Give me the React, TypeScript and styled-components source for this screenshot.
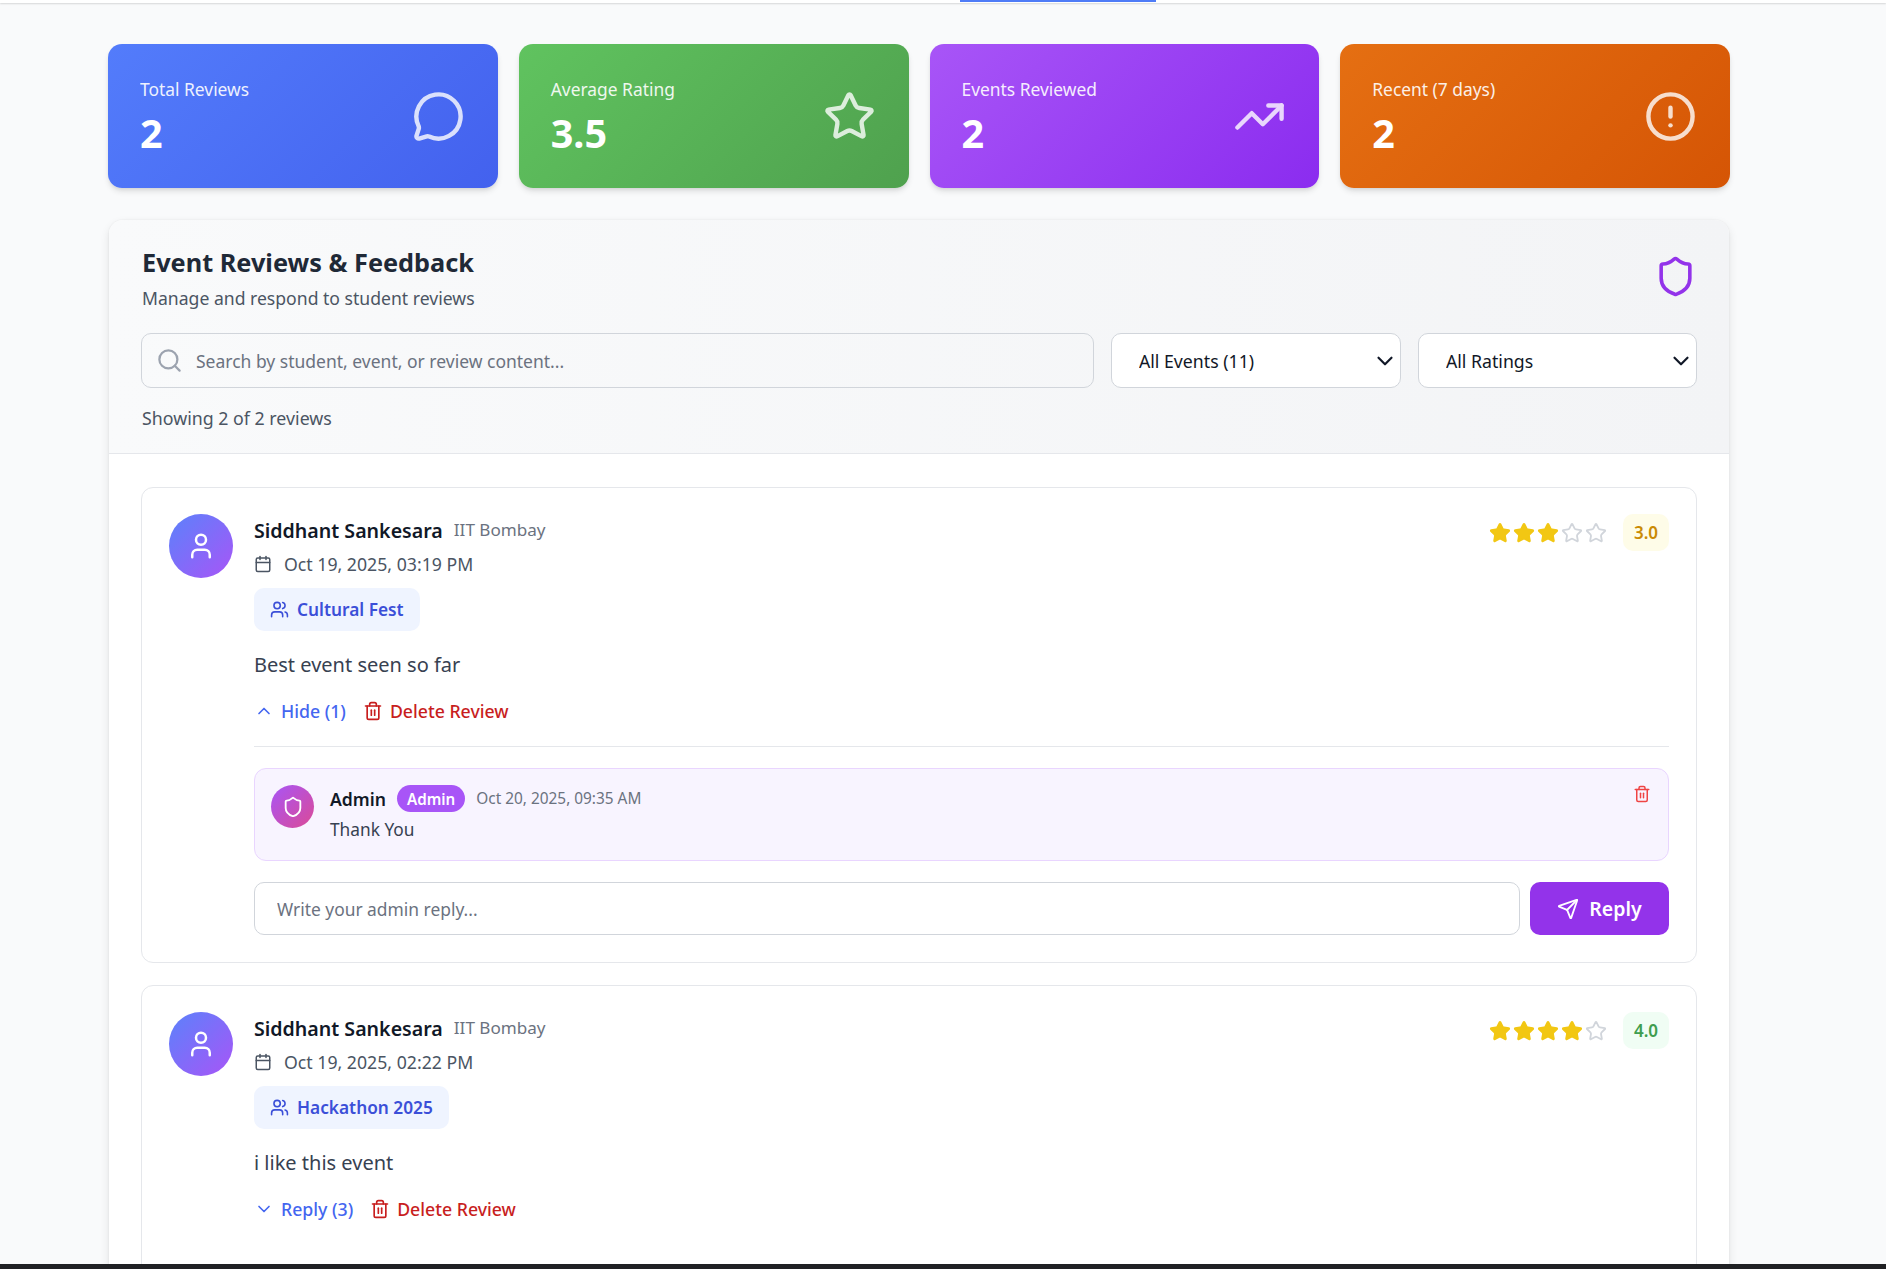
import React, { FC } from "react";
import styled, { createGlobalStyle } from "styled-components";
import {
  Calendar,
  ChevronDown,
  ChevronUp,
  CircleAlert,
  MessageCircle,
  Search,
  Send,
  Shield,
  Star,
  Trash2,
  TrendingUp,
  User,
  Users,
} from "lucide-react";

const GlobalStyle = createGlobalStyle`
  html, body {
    margin: 0;
    height: 100%;
    overflow: hidden;
    background: #f9fafb;
    font-family: "Noto Sans", "Open Sans", Arial, sans-serif;
  }
  * {
    box-sizing: border-box;
  }
`;

const Page = styled.div`
  display: flex;
  flex-direction: column;
  height: 100vh;
`;

const TopBar = styled.div`
  flex: none;
  height: 3px;
  padding-left: 960px;
  background: #ffffff;
  box-shadow: 0 1px 2px rgba(0, 0, 0, 0.14);
`;

const ActiveTab = styled.div`
  width: 196px;
  height: 2px;
  background: #4f7cf7;
`;

const Main = styled.main`
  flex: 1;
  min-height: 0;
  overflow: hidden;
  padding: 41px 0 0 108px;
`;

const Content = styled.div`
  width: 1622px;
`;

const StatGrid = styled.div`
  display: grid;
  grid-template-columns: repeat(4, 1fr);
  gap: 21px;
  margin-bottom: 32px;
`;

const StatCard = styled.div<{ $from: string; $to: string }>`
  display: flex;
  align-items: center;
  justify-content: space-between;
  height: 144px;
  padding: 0 33px 0 32px;
  border-radius: 14px;
  color: #ffffff;
  background: linear-gradient(135deg, ${(p) => p.$from}, ${(p) => p.$to});
  box-shadow: 0 4px 6px -1px rgba(0, 0, 0, 0.12), 0 2px 4px -2px rgba(0, 0, 0, 0.1);

  svg {
    opacity: 0.8;
  }
`;

const StatLabel = styled.div`
  font-size: 17.4px;
  line-height: 24px;
  opacity: 0.9;
  margin-bottom: 9px;
`;

const StatValue = styled.div`
  font-size: 39.5px;
  line-height: 46px;
  font-weight: 700;
`;

const Panel = styled.section`
  margin: 0 1px;
  background: #ffffff;
  border-radius: 14px 14px 0 0;
  box-shadow: 0 4px 10px rgba(0, 0, 0, 0.1), 0 0 2px rgba(0, 0, 0, 0.08);
  overflow: hidden;
`;

const PanelHeader = styled.header`
  padding: 25px 32px 23px;
  border-bottom: 1px solid #e5e7eb;
  background: linear-gradient(90deg, #f9fafb, #f3f4f6);
`;

const TitleRow = styled.div`
  display: flex;
  justify-content: space-between;
  align-items: center;
  margin-bottom: 23px;

  > svg {
    margin-bottom: 2px;
  }
`;

const Title = styled.h2`
  margin: -1px 0 6px;
  padding-left: 1px;
  font-size: 25.3px;
  line-height: 36px;
  font-weight: 700;
  color: #1f2937;
`;

const Subtitle = styled.p`
  margin: 0;
  padding-left: 1px;
  font-size: 17.6px;
  line-height: 24px;
  color: #4b5563;
`;

const Filters = styled.div`
  display: flex;
  gap: 17px;
  margin-bottom: 18px;
`;

const SearchBox = styled.label`
  position: relative;
  flex: 1;
  height: 55px;

  svg {
    position: absolute;
    left: 15px;
    top: 14px;
    color: #9ca3af;
  }
`;

const SearchInput = styled.input`
  width: 100%;
  height: 100%;
  padding: 0 16px 0 54px;
  border: 1px solid #d1d5db;
  border-radius: 10px;
  background: transparent;
  font: inherit;
  font-size: 17.5px;
  outline: none;

  &::placeholder {
    color: #6b7280;
    opacity: 1;
  }
`;

const SelectWrap = styled.div<{ $width: number }>`
  position: relative;
  flex: none;
  width: ${(p) => p.$width}px;
  height: 55px;

  svg {
    position: absolute;
    right: 3px;
    top: 15px;
    color: #111827;
    pointer-events: none;
  }
`;

const Select = styled.select`
  appearance: none;
  width: 100%;
  height: 100%;
  padding: 0 27px;
  border: 1px solid #d1d5db;
  border-radius: 10px;
  background: #ffffff;
  color: #111827;
  font: inherit;
  font-size: 17.7px;
`;

const ShowingText = styled.div`
  padding-left: 1px;
  font-size: 17.8px;
  line-height: 24px;
  color: #4b5563;
`;

const ReviewList = styled.div`
  display: flex;
  flex-direction: column;
  gap: 22px;
  padding: 33px 32px 0;
`;

const ReviewCard = styled.article`
  display: flex;
  gap: 21px;
  min-height: 320px;
  padding: 26px 27px 27px;
  border: 1px solid #e5e7eb;
  border-radius: 12px;
  background: #ffffff;
`;

const Avatar = styled.div<{ $size: number; $from: string; $to: string }>`
  display: flex;
  align-items: center;
  justify-content: center;
  flex: none;
  width: ${(p) => p.$size}px;
  height: ${(p) => p.$size}px;
  border-radius: 50%;
  color: #ffffff;
  background: linear-gradient(135deg, ${(p) => p.$from}, ${(p) => p.$to});
`;

const ReviewBody = styled.div`
  flex: 1;
  min-width: 0;
`;

const ReviewTop = styled.div`
  display: flex;
  justify-content: space-between;
  align-items: flex-start;
`;

const NameRow = styled.div`
  display: flex;
  align-items: center;
  gap: 11px;
  height: 26px;
  margin: 3px 0 9px;
`;

const StudentName = styled.span`
  font-size: 19.6px;
  font-weight: 600;
  color: #111827;
`;

const College = styled.span`
  margin-bottom: 2px;
  font-size: 17.1px;
  color: #6b7280;
`;

const DateRow = styled.div`
  display: flex;
  align-items: center;
  gap: 12px;
  height: 24px;
  margin-bottom: 12px;
  font-size: 17.7px;
  color: #4b5563;
`;

const EventChip = styled.div`
  display: inline-flex;
  align-items: center;
  gap: 8px;
  height: 43px;
  padding: 0 16px;
  border-radius: 10px;
  background: #eff4ff;
  color: #3b4fd8;
  font-size: 17.3px;
  font-weight: 600;
`;

const RatingRow = styled.div`
  display: flex;
  align-items: center;
  gap: 16px;
`;

const Stars = styled.div`
  display: flex;
  gap: 2px;
`;

const RatingBadge = styled.div<{ $bg: string; $color: string }>`
  display: flex;
  align-items: center;
  justify-content: center;
  width: 46px;
  height: 37px;
  border-radius: 10px;
  background: ${(p) => p.$bg};
  color: ${(p) => p.$color};
  font-size: 17px;
  font-weight: 600;
`;

const Comment = styled.p`
  margin: 20px 0 20px;
  font-size: 20px;
  line-height: 28px;
  color: #374151;
`;

const Actions = styled.div`
  display: flex;
  align-items: center;
  gap: 17px;
  height: 24px;
`;

const ActionLink = styled.button<{ $color: string }>`
  display: inline-flex;
  align-items: center;
  gap: 7px;
  padding: 0;
  border: 0;
  background: none;
  color: ${(p) => p.$color};
  font: inherit;
  font-size: 17.7px;
  font-weight: 500;
`;

const Replies = styled.div`
  margin-top: 23px;
  padding-top: 21px;
  border-top: 1px solid #e5e7eb;
`;

const ReplyBox = styled.div`
  display: flex;
  gap: 16px;
  height: 93px;
  padding: 16px 17px 16px 16px;
  border: 1px solid #e9d5ff;
  border-radius: 12px;
  background: #f8f4ff;
`;

const ReplyBody = styled.div`
  flex: 1;
`;

const ReplyHead = styled.div`
  display: flex;
  align-items: center;
  gap: 11px;
  height: 27px;
  margin-bottom: 6px;
`;

const ReplyAuthor = styled.span`
  font-size: 17.6px;
  font-weight: 600;
  color: #111827;
`;

const AdminPill = styled.span`
  display: flex;
  align-items: center;
  height: 27px;
  padding: 0 10px;
  border-radius: 14px;
  background: #a855f7;
  color: #ffffff;
  font-size: 15.2px;
  font-weight: 600;
`;

const ReplyDate = styled.span`
  font-size: 15.4px;
  color: #6b7280;
`;

const ReplyText = styled.div`
  font-size: 17.3px;
  line-height: 24px;
  color: #374151;
`;

const ReplyDelete = styled.button`
  flex: none;
  align-self: flex-start;
  height: 18px;
  padding: 0;
  border: 0;
  background: none;
  color: #ef4444;
`;

const ReplyForm = styled.div`
  display: flex;
  gap: 10px;
  margin-top: 21px;
`;

const ReplyInput = styled.input`
  flex: 1;
  height: 53px;
  padding: 0 22px;
  border: 1px solid #d1d5db;
  border-radius: 10px;
  background: #ffffff;
  font: inherit;
  font-size: 17.4px;
  outline: none;

  &::placeholder {
    color: #6b7280;
    opacity: 1;
  }
`;

const ReplyButton = styled.button`
  display: flex;
  align-items: center;
  justify-content: center;
  gap: 10px;
  flex: none;
  width: 139px;
  height: 53px;
  border: 0;
  border-radius: 10px;
  background: #9333ea;
  color: #ffffff;
  font: inherit;
  font-size: 19.5px;
  font-weight: 600;
`;

const BottomBar = styled.div`
  flex: none;
  height: 5px;
  background: #202124;
`;

const stats = [
  { label: "Total Reviews", value: "2", from: "#537cfb", to: "#4361ee", Icon: MessageCircle },
  { label: "Average Rating", value: "3.5", from: "#60c35f", to: "#4fa14e", Icon: Star },
  { label: "Events Reviewed", value: "2", from: "#a855f7", to: "#8b2cef", Icon: TrendingUp },
  { label: "Recent (7 days)", value: "2", from: "#e56f12", to: "#d55505", Icon: CircleAlert },
];

const RatingStars: FC<{ rating: number }> = ({ rating }) => (
  <Stars>
    {[1, 2, 3, 4, 5].map((n) => (
      <Star
        key={n}
        size={22}
        color={n <= rating ? "#f2c713" : "#d1d5db"}
        fill={n <= rating ? "#f2c713" : "none"}
      />
    ))}
  </Stars>
);

const ReviewMain: FC<{
  date: string;
  event: string;
  rating: number;
  badgeBg: string;
  badgeColor: string;
  comment: string;
}> = ({ date, event, rating, badgeBg, badgeColor, comment }) => (
  <>
    <ReviewTop>
      <div>
        <NameRow>
          <StudentName>Siddhant Sankesara</StudentName>
          <College>IIT Bombay</College>
        </NameRow>
        <DateRow>
          <Calendar size={18} />
          {date}
        </DateRow>
        <EventChip>
          <Users size={19} />
          {event}
        </EventChip>
      </div>
      <RatingRow>
        <RatingStars rating={rating} />
        <RatingBadge $bg={badgeBg} $color={badgeColor}>
          {rating.toFixed(1)}
        </RatingBadge>
      </RatingRow>
    </ReviewTop>
    <Comment>{comment}</Comment>
  </>
);

export default function App() {
  return (
    <Page>
      <GlobalStyle />
      <TopBar>
        <ActiveTab />
      </TopBar>
      <Main>
        <Content>
          <StatGrid>
            {stats.map(({ label, value, from, to, Icon }) => (
              <StatCard key={label} $from={from} $to={to}>
                <div>
                  <StatLabel>{label}</StatLabel>
                  <StatValue>{value}</StatValue>
                </div>
                <Icon size={53} />
              </StatCard>
            ))}
          </StatGrid>

          <Panel>
            <PanelHeader>
              <TitleRow>
                <div>
                  <Title>Event Reviews &amp; Feedback</Title>
                  <Subtitle>Manage and respond to student reviews</Subtitle>
                </div>
                <Shield size={43} color="#9333ea" />
              </TitleRow>
              <Filters>
                <SearchBox>
                  <Search size={27} />
                  <SearchInput placeholder="Search by student, event, or review content..." />
                </SearchBox>
                <SelectWrap $width={290}>
                  <Select defaultValue="all">
                    <option value="all">All Events (11)</option>
                  </Select>
                  <ChevronDown size={26} />
                </SelectWrap>
                <SelectWrap $width={279}>
                  <Select defaultValue="all">
                    <option value="all">All Ratings</option>
                  </Select>
                  <ChevronDown size={26} />
                </SelectWrap>
              </Filters>
              <ShowingText>Showing 2 of 2 reviews</ShowingText>
            </PanelHeader>

            <ReviewList>
              <ReviewCard>
                <Avatar $size={64} $from="#5b82fb" $to="#a855f7">
                  <User size={30} />
                </Avatar>
                <ReviewBody>
                  <ReviewMain
                    date="Oct 19, 2025, 03:19 PM"
                    event="Cultural Fest"
                    rating={3}
                    badgeBg="#fefce8"
                    badgeColor="#ca8a04"
                    comment="Best event seen so far"
                  />
                  <Actions>
                    <ActionLink $color="#4466f0">
                      <ChevronUp size={20} />
                      Hide (1)
                    </ActionLink>
                    <ActionLink $color="#c81e1e">
                      <Trash2 size={20} />
                      Delete Review
                    </ActionLink>
                  </Actions>
                  <Replies>
                    <ReplyBox>
                      <Avatar $size={43} $from="#a855f7" $to="#db4a96">
                        <Shield size={22} />
                      </Avatar>
                      <ReplyBody>
                        <ReplyHead>
                          <ReplyAuthor>Admin</ReplyAuthor>
                          <AdminPill>Admin</AdminPill>
                          <ReplyDate>Oct 20, 2025, 09:35 AM</ReplyDate>
                        </ReplyHead>
                        <ReplyText>Thank You</ReplyText>
                      </ReplyBody>
                      <ReplyDelete>
                        <Trash2 size={18} />
                      </ReplyDelete>
                    </ReplyBox>
                    <ReplyForm>
                      <ReplyInput placeholder="Write your admin reply..." />
                      <ReplyButton>
                        <Send size={22} />
                        Reply
                      </ReplyButton>
                    </ReplyForm>
                  </Replies>
                </ReviewBody>
              </ReviewCard>

              <ReviewCard>
                <Avatar $size={64} $from="#5b82fb" $to="#a855f7">
                  <User size={30} />
                </Avatar>
                <ReviewBody>
                  <ReviewMain
                    date="Oct 19, 2025, 02:22 PM"
                    event="Hackathon 2025"
                    rating={4}
                    badgeBg="#f0fdf4"
                    badgeColor="#3f9d4f"
                    comment="i like this event"
                  />
                  <Actions>
                    <ActionLink $color="#4466f0">
                      <ChevronDown size={20} />
                      Reply (3)
                    </ActionLink>
                    <ActionLink $color="#c81e1e">
                      <Trash2 size={20} />
                      Delete Review
                    </ActionLink>
                  </Actions>
                </ReviewBody>
              </ReviewCard>
            </ReviewList>
          </Panel>
        </Content>
      </Main>
      <BottomBar />
    </Page>
  );
}
